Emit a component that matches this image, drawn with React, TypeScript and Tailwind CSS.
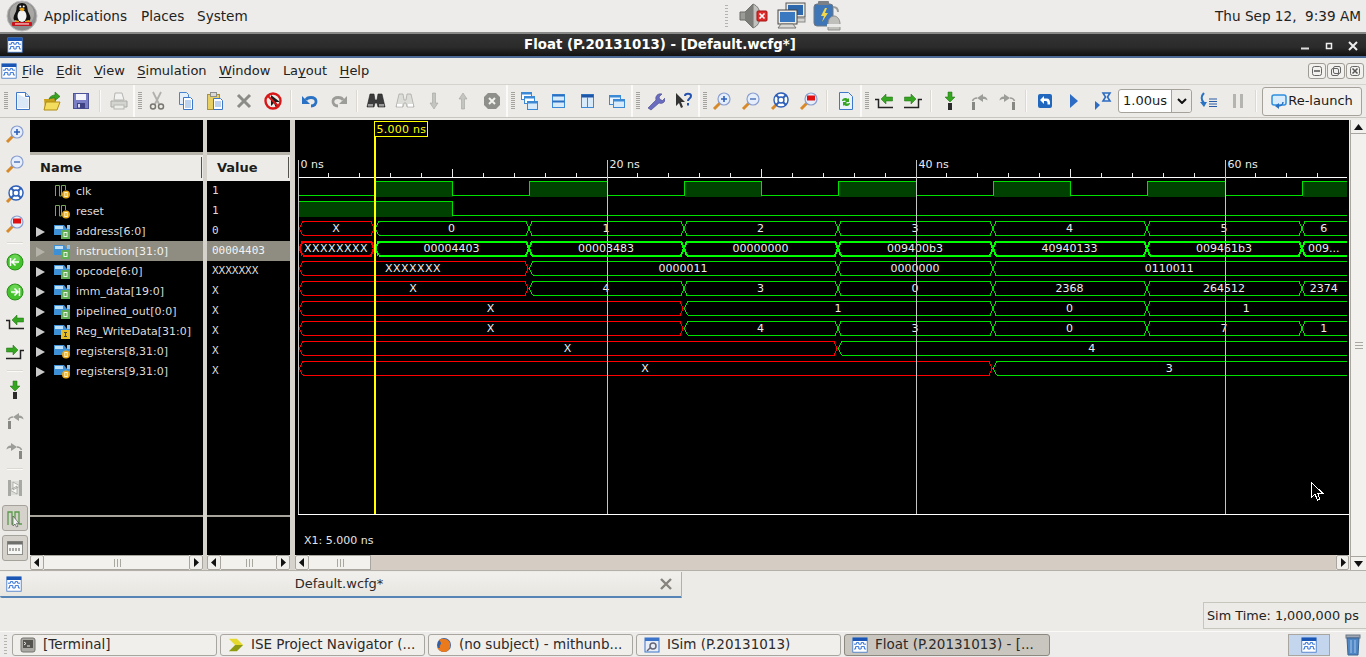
import type { ReactNode } from "react";

const FONT = "font-['DejaVu_Sans','Liberation_Sans',sans-serif]";

function Ico({ children, size = 20 }: { children: ReactNode; size?: number }) {
  return (
    <svg width={size} height={size} viewBox="0 0 20 20" className="block shrink-0">
      {children}
    </svg>
  );
}

/* ---------- app icons ---------- */

function WaveApp({ size = 16 }: { size?: number }) {
  return (
    <Ico size={size}>
      <rect x="1" y="1" width="18" height="18" fill="#fff" stroke="#3b74c9" />
      <rect x="1" y="1" width="18" height="4" fill="#1c56b4" />
      <path d="M2.5 9h3v-2h3v2h3v-2h3v2h3M2.5 15h2v-3h4v3h3v-3h4v3h2" fill="none" stroke="#2f6fd6" strokeWidth="1.2" />
    </Ico>
  );
}

function Tux() {
  return (
    <svg width="32" height="32" viewBox="0 0 32 32" className="block">
      <circle cx="16" cy="16" r="15" fill="#8d8d8d" stroke="#bdbdbd" />
      <circle cx="16" cy="14" r="12" fill="#a9a7a4" />
      <path d="M16 3c-4 0-5.500 3-5.500 6 0 3-3 6-3 9 0 3 3 4 8.500 4s8.500-1 8.500-4c0-3-3-6-3-9 0-3-1.500-6-5.500-6z" fill="#111" />
      <ellipse cx="16" cy="16" rx="4.500" ry="6" fill="#f2f2f2" />
      <path d="M13 9l3-1.500 3 1.500-3 2.500z" fill="#f0a417" />
      <circle cx="14.300" cy="6.500" r="1" fill="#fff" />
      <circle cx="17.700" cy="6.500" r="1" fill="#fff" />
      <path d="M9 20l4 1v2H9zM23 20l-4 1v2h4z" fill="#f0a417" />
      <rect x="6" y="22" width="20" height="4" rx="1" fill="#c8141c" />
      <rect x="9" y="23.300" width="14" height="1.300" fill="#f3c6c6" />
    </svg>
  );
}

function Speaker() {
  return (
    <svg width="30" height="30" viewBox="0 0 30 30" className="block">
      <path d="M2 11h5l8-8v24l-8-8H2z" fill="#9a9a96" stroke="#6c6c68" />
      <path d="M15 3c5 2 7 6 7 12s-2 10-7 12z" fill="#c2c1bd" stroke="#777" />
      <path d="M7 11l8-8v24l-8-8z" fill="#7c7c78" />
      <rect x="19" y="10" width="10" height="10" rx="1" fill="#e22b2b" stroke="#a31414" />
      <path d="M21.500 12.500l5 5m0-5l-5 5" stroke="#fff" strokeWidth="1.600" />
    </svg>
  );
}

function Network() {
  return (
    <svg width="30" height="30" viewBox="0 0 30 30" className="block">
      <rect x="9" y="2" width="19" height="14" fill="#e9e9e7" stroke="#555" />
      <rect x="11" y="4" width="15" height="10" fill="#2d68ad" />
      <rect x="14" y="17" width="14" height="4" fill="#d4d3cf" stroke="#888" />
      <rect x="1" y="9" width="19" height="14" fill="#ecebe8" stroke="#444" />
      <rect x="3" y="11" width="15" height="10" fill="#3a79c0" />
      <path d="M5 23h11l3 4H1l3-4z" fill="#d9d8d4" stroke="#777" />
    </svg>
  );
}

function Battery() {
  return (
    <svg width="32" height="32" viewBox="0 0 32 32" className="block">
      <rect x="1" y="4" width="19" height="22" rx="3" fill="#3f76b8" stroke="#6f7883" />
      <rect x="5" y="1" width="11" height="4" rx="1" fill="#7a8086" />
      <path d="M20 7c4 0 5 2 5 5" fill="none" stroke="#9d9d9a" strokeWidth="2" />
      <path d="M12 8l-4 8h3l-2 6 6-9h-3l2-5z" fill="#f2d94c" />
      <path d="M15 30v-6c0-5 3-8 6-8s6 3 6 8v6z" fill="#bfbfbc" stroke="#8f8f8c" />
      <rect x="14" y="24" width="14" height="3" fill="#e9e9e7" />
    </svg>
  );
}

/* ---------- toolbar icons ---------- */

const Doc = ({ stroke = "#3f78c8" }: { stroke?: string }) => (
  <Ico>
    <path d="M3.500 1.500h9l4 4v13h-13z" fill="#fff" stroke={stroke} />
    <path d="M4.500 3v14h11V8z" fill="#dbe8f8" />
    <path d="M12.500 1.500v4h4" fill="#cfe0f5" stroke={stroke} />
  </Ico>
);
const Open = () => (
  <Ico>
    <path d="M2 8h6l1-2h5v12H3z" fill="#c9a21a" />
    <path d="M4 11h14l-3 8H2z" fill="#f4dc5f" stroke="#b08d14" />
    <path d="M7 8c1-3 4-4 6-4V1l5 4.500-5 4V7c-2 0-4 0-6 1z" fill="#3aa321" stroke="#1d6f10" strokeWidth=".6" />
  </Ico>
);
const Save = () => (
  <Ico>
    <rect x="2.500" y="2.500" width="15" height="15" fill="#7a7ec4" stroke="#4e5296" />
    <rect x="5" y="3" width="10" height="6" fill="#f4f4fb" />
    <rect x="6" y="12" width="8" height="5.500" fill="#3f4383" />
    <rect x="7" y="13" width="2" height="3.500" fill="#d8d9ee" />
  </Ico>
);
const Print = () => (
  <Ico>
    <path d="M6 2h7l2 7H5z" fill="#f2f2f0" stroke="#b5b5b2" />
    <path d="M2 10h16v6H2z" fill="#d4d4d1" stroke="#a9a9a6" />
    <rect x="5" y="14" width="10" height="4" fill="#ecece9" stroke="#b5b5b2" />
  </Ico>
);
const Cut = () => (
  <Ico>
    <path d="M6 1l6 12M14 1l-6 12" stroke="#b0b0ad" strokeWidth="1.800" />
    <circle cx="6" cy="15.500" r="2.500" fill="none" stroke="#77776f" strokeWidth="1.500" />
    <circle cx="14" cy="15.500" r="2.500" fill="none" stroke="#77776f" strokeWidth="1.500" />
  </Ico>
);
const Copy = () => (
  <Ico>
    <path d="M3.500 1.500h7l2 2v10h-9z" fill="#e5effa" stroke="#4a83cf" />
    <path d="M7.500 6.500h7l2 2v10h-9z" fill="#fff" stroke="#3d78c8" />
    <path d="M9 10h6M9 12h6M9 14h6M9 16h6" stroke="#7aa5dc" />
  </Ico>
);
const Paste = () => (
  <Ico>
    <rect x="2.500" y="3.500" width="12" height="15" fill="#e8cf61" stroke="#ab9235" />
    <rect x="5.500" y="1.500" width="6" height="4" fill="#d9d9d6" stroke="#8d8d8a" />
    <path d="M8.500 7.500h7l2 2v9h-9z" fill="#fff" stroke="#3d78c8" />
    <path d="M10 11h6M10 13h6M10 15h6" stroke="#7aa5dc" />
  </Ico>
);
const Del = () => (
  <Ico>
    <path d="M4 4l12 12M16 4L4 16" stroke="#8b8b87" strokeWidth="3" />
  </Ico>
);
const NoDrag = () => (
  <Ico>
    <path d="M8 4l0 11 3-3 2 5 2-1-2-5 4 0z" fill="#1c1c1c" />
    <circle cx="10" cy="10" r="7.500" fill="none" stroke="#d81818" strokeWidth="2.400" />
    <path d="M4.700 4.700l10.600 10.600" stroke="#d81818" strokeWidth="2" />
  </Ico>
);
const Undo = ({ color = "#2a72c4" }: { color?: string }) => (
  <Ico>
    <path d="M6 9c1-3 9-4 10 1 .5 3-2 5-5 5" fill="none" stroke={color} strokeWidth="2.800" />
    <path d="M2 5v8h8z" fill={color} />
  </Ico>
);
const Redo = ({ color = "#9c9c99" }: { color?: string }) => (
  <Ico>
    <path d="M14 9c-1-3-9-4-10 1-.5 3 2 5 5 5" fill="none" stroke={color} strokeWidth="2.800" />
    <path d="M18 5v8h-8z" fill={color} />
  </Ico>
);
const Binoc = ({ dim = false }: { dim?: boolean }) => (
  <Ico>
    <path d="M4 3h4l1 6h2l1-6h4l3 13h-7l-1-4H9l-1 4H1z" fill={dim ? "#dcdcd8" : "#3b3b3b"} stroke={dim ? "#999" : "#222"} strokeWidth=".6" />
    <rect x="2" y="13" width="5" height="2.500" fill={dim ? "#fff" : "#999"} />
    <rect x="13" y="13" width="5" height="2.500" fill={dim ? "#fff" : "#999"} />
  </Ico>
);
const ArrowV = ({ up = false }: { up?: boolean }) => (
  <Ico>
    <path d={up ? "M10 2l4 6h-2.500v10h-3V8H6z" : "M10 18l4-6h-2.500V2h-3v10H6z"} fill="#c4c4c0" stroke="#a3a3a0" strokeWidth=".6" />
  </Ico>
);
const Stop = () => (
  <Ico>
    <path d="M6 2h8l4 4v8l-4 4H6l-4-4V6z" fill="#8e8e8a" />
    <path d="M7 7l6 6m0-6l-6 6" stroke="#f1f1ef" strokeWidth="2" />
  </Ico>
);
const Cascade = () => (
  <Ico>
    <rect x="1.500" y="1.500" width="10" height="7" fill="#fff" stroke="#3c8ad6" />
    <rect x="1.500" y="1.500" width="10" height="2" fill="#3c8ad6" />
    <rect x="4.500" y="5.500" width="10" height="7" fill="#fff" stroke="#3c8ad6" />
    <rect x="4.500" y="5.500" width="10" height="2" fill="#3c8ad6" />
    <rect x="7.500" y="10.500" width="10" height="8" fill="#d8ebfb" stroke="#3c8ad6" />
    <rect x="7.500" y="10.500" width="10" height="2" fill="#3c8ad6" />
  </Ico>
);
const SplitH = () => (
  <Ico>
    <rect x="3.500" y="3.500" width="12" height="13" fill="#d8ebfb" stroke="#3c8ad6" />
    <rect x="3.500" y="3.500" width="12" height="2" fill="#2a6fc2" />
    <rect x="3.500" y="9.500" width="12" height="2" fill="#2a6fc2" />
  </Ico>
);
const SplitV = () => (
  <Ico>
    <rect x="3.500" y="3.500" width="12" height="13" fill="#d8ebfb" stroke="#3c8ad6" />
    <rect x="3.500" y="3.500" width="12" height="3" fill="#1f56a8" />
    <path d="M9.500 6v10" stroke="#3c8ad6" />
  </Ico>
);
const Tile = () => (
  <Ico>
    <rect x="2.500" y="4.500" width="11" height="9" fill="#eaf4fd" stroke="#3c8ad6" />
    <rect x="2.500" y="4.500" width="11" height="2" fill="#3c8ad6" />
    <rect x="6.500" y="8.500" width="11" height="8" fill="#d8ebfb" stroke="#3c8ad6" />
    <rect x="6.500" y="8.500" width="11" height="2" fill="#3c8ad6" />
  </Ico>
);
const Wrench = () => (
  <Ico>
    <path d="M3 17l8-8c-1-3 1-7 6-6l-3 3 1 2.500 2.500 1 3-3c.5 4-3 7-6.500 5.500l-8 7z" fill="#6a6cc0" stroke="#45478c" strokeWidth=".6" />
  </Ico>
);
const Help = () => (
  <Ico>
    <path d="M2 2v13l3-3 2 5 2-1-2-5h4z" fill="#333" />
    <path d="M11 5c0-3 6-3 6 0 0 2.500-3 2.500-3 5" fill="none" stroke="#2452b0" strokeWidth="2" />
    <rect x="13" y="12" width="2" height="2.500" fill="#2452b0" />
  </Ico>
);
const Lens = ({ kind }: { kind: "in" | "out" | "fit" | "area" }) => (
  <Ico>
    <path d="M8.500 11.500L2 18" stroke="#d88a2a" strokeWidth="3" />
    <circle cx="12" cy="8" r="6" fill="#e6eefb" stroke="#8a9fd0" strokeWidth="1.200" />
    {kind === "in" && <path d="M9 8h6M12 5v6" stroke="#2d5fb8" strokeWidth="1.600" />}
    {kind === "out" && <path d="M9 8h6" stroke="#5d7fc0" strokeWidth="1.600" />}
    {kind === "fit" && (
      <>
        <circle cx="11" cy="9" r="7" fill="#fff" stroke="#2d5fb8" strokeWidth="1.400" />
        <circle cx="11" cy="9" r="3" fill="#fff" stroke="#2d5fb8" strokeWidth="1.400" />
        <path d="M6 4l2.800 2.800M16 4l-2.800 2.800M6 14l2.800-2.800M16 14l-2.800-2.800" stroke="#2d5fb8" strokeWidth="2" />
      </>
    )}
    {kind === "area" && <rect x="8" y="4.500" width="8" height="5" fill="#e01010" />}
  </Ico>
);
const Refresh = () => (
  <Ico>
    <path d="M3.500 1.500h9l4 4v13h-13z" fill="#eaf3fc" stroke="#3f78c8" />
    <path d="M6 10c0-3 4-4 6-2l1-1v4h-4l1-1c-1-1-2.500-.5-3 0zM14 12c0 3-4 4-6 2l-1 1v-4h4l-1 1c1 1 2.500.5 3 0z" fill="#36a521" />
  </Ico>
);
const Step1 = () => (
  <Ico>
    <path d="M1 8.500h3.500v8H19" fill="none" stroke="#222" strokeWidth="1.500" />
    <path d="M7 8l5-5v3h6.500v4H12v3z" fill="#36a521" stroke="#1c6d10" strokeWidth=".5" />
  </Ico>
);
const Step2 = () => (
  <Ico>
    <path d="M1 16.500h14.500v-8H19" fill="none" stroke="#222" strokeWidth="1.500" />
    <path d="M13 8L8 3v3H1.500v4H8v3z" fill="#36a521" stroke="#1c6d10" strokeWidth=".5" />
  </Ico>
);
const GreenCircle = ({ right = false }: { right?: boolean }) => (
  <Ico>
    <circle cx="10" cy="10" r="8" fill="#43c22b" stroke="#2b8f1a" />
    <circle cx="10" cy="7.500" r="5" fill="#8fe57a" opacity=".5" />
    <path d={right ? "M14.500 6v8M6 10h7M9.500 6.500L13 10l-3.500 3.500" : "M5.500 6v8M14 10H7M10.500 6.500L7 10l3.500 3.500"} fill="none" stroke="#fff" strokeWidth="1.500" />
  </Ico>
);
const GreenDown = () => (
  <Ico>
    <path d="M10 11l5-5h-3V1H8v5H5z" fill="#36a521" stroke="#1c6d10" strokeWidth=".5" />
    <rect x="8" y="12" width="4" height="7" fill="#2c2c2c" />
  </Ico>
);
const StepBack = () => (
  <Ico>
    <rect x="3" y="11" width="3" height="8" fill="#878784" />
    <path d="M8 7l6-4v2.500c3 0 4.500 2 4.500 4-1.500-1.500-3-1.500-4.500-1.500v3z" fill="#9c9c99" />
    <path d="M8 7c-2 0-4 1.500-4.500 3" stroke="#9c9c99" fill="none" strokeWidth="1.500" />
  </Ico>
);
const StepFwd = () => (
  <Ico>
    <rect x="14" y="11" width="3" height="8" fill="#878784" />
    <path d="M12 7L6 3v2.500c-3 0-4.500 2-4.500 4 1.500-1.500 3-1.500 4.500-1.500v3z" fill="#9c9c99" />
    <path d="M12 7c2 0 4 1.500 4.500 3" stroke="#9c9c99" fill="none" strokeWidth="1.500" />
  </Ico>
);
const Back = () => (
  <Ico>
    <rect x="3" y="3" width="14" height="14" rx="2" fill="#2167bd" />
    <path d="M5 9l4-4v2.500h3c2 0 3 2 3 4v2h-2.500v-1.500c0-1-.5-2-1.500-2H9V13z" fill="#fff" />
  </Ico>
);
const Play = () => (
  <Ico>
    <path d="M6 3l8 7-8 7z" fill="#2d6cc4" />
  </Ico>
);
const Sand = () => (
  <Ico>
    <path d="M2 10l5 4-5 5z" fill="#2d6cc4" />
    <path d="M10 2h7l-2.500 4 2.500 4h-7l2.500-4z" fill="none" stroke="#2d6cc4" strokeWidth="1.600" />
  </Ico>
);
const Restart = () => (
  <Ico>
    <path d="M5 2c-3 3-3 7 0 10" fill="none" stroke="#2a72c4" strokeWidth="2.200" />
    <path d="M1 11l7 0 -3 5z" fill="#2a72c4" />
    <path d="M10 8h8M10 10.500h8M10 13h8M10 15.500h8" stroke="#2a5ca8" strokeWidth="1.200" />
  </Ico>
);
const Pause = () => (
  <Ico>
    <rect x="5" y="3" width="3" height="14" fill="#b4b4b0" />
    <rect x="12" y="3" width="3" height="14" fill="#b4b4b0" />
  </Ico>
);
const Relaunch = () => (
  <svg width="16" height="16" viewBox="0 0 16 16" className="block">
    <rect x="1" y="2" width="14" height="10" rx="2" fill="#d8ecfb" stroke="#2f8fe0" strokeWidth="1.500" />
    <path d="M12 9c0 3-3 4-5 4" fill="none" stroke="#2a72c4" strokeWidth="1.500" />
    <path d="M8 10v6l-4-3z" fill="#2a72c4" />
  </svg>
);
const WaveToggle = () => (
  <Ico>
    <path d="M3 17V4h4v12h3V4h4v12h3" fill="none" stroke="#5a9b4a" strokeWidth="1.300" />
    <path d="M8 8v10l2-2 1.500 3 1.500-.7-1.500-3H14z" fill="#f2f2f2" stroke="#444" strokeWidth=".6" />
  </Ico>
);
const Swap = () => (
  <Ico>
    <path d="M3 2h3v16H3zM14 2h3v16h-3z" fill="#a8a8a5" />
    <path d="M6 3h8v14H6z" fill="#dcdcd9" />
    <path d="M8 4l7 4-7 4zM12 8l-7 4 7 4z" fill="#f7f7f5" stroke="#8e8e8a" strokeWidth=".6" />
  </Ico>
);
const Clock = () => (
  <Ico>
    <rect x="2.500" y="3.500" width="15" height="13" fill="#f7f7f5" stroke="#8e8e8a" />
    <rect x="2.500" y="3.500" width="15" height="3" fill="#6f6f6c" />
    <path d="M5 10v3M8 10v3M11 10v3M14 10v3" stroke="#8e8e8a" strokeWidth="1.500" />
  </Ico>
);

/* ---------- toolbar bits ---------- */

function Btn({ children }: { children: ReactNode }) {
  return <div className="w-[29px] flex items-center justify-center shrink-0">{children}</div>;
}
function Sep() {
  return (
    <div className="w-[8px] flex justify-center items-center shrink-0">
      <div className="w-[2px] h-[22px] bg-[#dcd9d3] border-r border-[#fbfaf8]" />
    </div>
  );
}
function Grip() {
  return <div className="w-[4px] h-[18px] bg-[repeating-linear-gradient(to_bottom,#a5a39d_0,#a5a39d_1px,transparent_1px,transparent_2px)]" />;
}
/* toolbar break: bevel line, then the drag handle of the next group */
function Break() {
  return (
    <div className="w-[9px] self-stretch flex items-center shrink-0 border-l-2 border-[#fbfaf8] pl-[3px]">
      <Grip />
    </div>
  );
}

function Toolbar() {
  return (
    <div className="h-[34px] flex items-stretch shrink-0 bg-[#edebe7] border-t border-[#d6d3cd] border-b border-b-[#c9c6c0]">
      <div className="w-[8px] flex items-center pl-[4px] shrink-0">
        <Grip />
      </div>
      <Btn><Doc /></Btn>
      <Btn><Open /></Btn>
      <Btn><Save /></Btn>
      <div className="w-[9px] flex justify-center items-center shrink-0">
        <div className="w-[2px] h-[22px] bg-[#dcd9d3] border-r border-[#fbfaf8]" />
      </div>
      <Btn><Print /></Btn>
      <Break />
      <Btn><Cut /></Btn>
      <Btn><Copy /></Btn>
      <Btn><Paste /></Btn>
      <Btn><Del /></Btn>
      <Btn><NoDrag /></Btn>
      <Sep />
      <Btn><Undo /></Btn>
      <Btn><Redo /></Btn>
      <Sep />
      <Btn><Binoc /></Btn>
      <Btn><Binoc dim /></Btn>
      <Btn><ArrowV /></Btn>
      <Btn><ArrowV up /></Btn>
      <Btn><Stop /></Btn>
      <Break />
      <Btn><Cascade /></Btn>
      <Btn><SplitH /></Btn>
      <Btn><SplitV /></Btn>
      <Btn><Tile /></Btn>
      <Break />
      <Btn><Wrench /></Btn>
      <Btn><Help /></Btn>
      <Break />
      <Btn><Lens kind="in" /></Btn>
      <Btn><Lens kind="out" /></Btn>
      <Btn><Lens kind="fit" /></Btn>
      <Btn><Lens kind="area" /></Btn>
      <Sep />
      <Btn><Refresh /></Btn>
      <Break />
      <Btn><Step1 /></Btn>
      <Btn><Step2 /></Btn>
      <Sep />
      <Btn><GreenDown /></Btn>
      <Btn><StepBack /></Btn>
      <Btn><StepFwd /></Btn>
      <Sep />
      <Btn><Back /></Btn>
      <Btn><Play /></Btn>
      <Btn><Sand /></Btn>
      <div className="w-[74px] h-[24px] self-center ml-[1px] mr-[2px] flex shrink-0 rounded-[3px] border border-[#a5a29c] bg-white text-[13px] text-[#1a1a1a]">
        <div className="flex-1 pl-[4px] leading-[22px]">1.00us</div>
        <div className="w-[20px] border-l border-[#a5a29c] bg-[#eeece8] flex items-center justify-center rounded-r-[3px]">
          <svg width="10" height="6" viewBox="0 0 10 6" className="block">
            <path d="M1 1l4 4 4-4" fill="none" stroke="#111" strokeWidth="2" />
          </svg>
        </div>
      </div>
      <Btn><Restart /></Btn>
      <Btn><Pause /></Btn>
      <Sep />
      <div className="ml-[2px] w-[100px] h-[29px] self-center flex items-center justify-center gap-[1px] shrink-0 rounded-[3px] border border-[#a5a29c] bg-[#f3f1ee] text-[13px] text-[#1a1a1a]">
        <Relaunch />
        <span>Re-launch</span>
      </div>
    </div>
  );
}

/* ---------- side toolbar ---------- */

function SideBtn({ children, boxed = false }: { children: ReactNode; boxed?: boolean }) {
  return (
    <div className="h-[30px] flex items-center justify-center shrink-0">
      {boxed ? (
        <div className="w-[26px] h-[26px] rounded-[3px] border border-[#a5a29c] bg-[#d5d2cc] flex items-center justify-center">
          {children}
        </div>
      ) : (
        children
      )}
    </div>
  );
}
function SideSep() {
  return (
    <div className="h-[8px] flex items-center justify-center shrink-0">
      <div className="w-[16px] h-[2px] bg-[#dcd9d3] border-b border-[#fbfaf8]" />
    </div>
  );
}
function SideBar() {
  return (
    <div className="w-[30px] -mt-[1px] flex flex-col shrink-0">
      <SideBtn><Lens kind="in" /></SideBtn>
      <SideBtn><Lens kind="out" /></SideBtn>
      <SideBtn><Lens kind="fit" /></SideBtn>
      <SideBtn><Lens kind="area" /></SideBtn>
      <SideSep />
      <SideBtn><GreenCircle /></SideBtn>
      <SideBtn><GreenCircle right /></SideBtn>
      <SideBtn><Step1 /></SideBtn>
      <SideBtn><Step2 /></SideBtn>
      <SideSep />
      <SideBtn><GreenDown /></SideBtn>
      <SideBtn><StepBack /></SideBtn>
      <SideBtn><StepFwd /></SideBtn>
      <SideSep />
      <SideBtn><Swap /></SideBtn>
      <SideBtn boxed><WaveToggle /></SideBtn>
      <SideBtn boxed><Clock /></SideBtn>
    </div>
  );
}

/* ---------- scrollbars ---------- */

function ArrowBtn({ dir, wide = 14 }: { dir: "l" | "r"; wide?: number }) {
  return (
    <div className="h-full flex items-center justify-center bg-[#f1efec] border border-[#a9a69f] rounded-[2px] shrink-0" style={{ width: wide }}>
      <svg width="6" height="9" viewBox="0 0 6 9" className="block">
        <path d={dir === "l" ? "M5 0v9L0 4.500z" : "M1 0v9l5-4.500z"} fill="#111" />
      </svg>
    </div>
  );
}
function Grips() {
  return (
    <svg width="8" height="8" viewBox="0 0 8 8" className="block">
      <path d="M1.500 0v8M4.500 0v8M7.500 0v8" stroke="#aaa79f" />
    </svg>
  );
}
function HScroll() {
  return (
    <div className="h-[15px] flex shrink-0">
      <ArrowBtn dir="l" />
      <div className="flex-1 bg-[#f3f1ee] border-y border-[#a9a69f] flex items-center justify-center">
        <Grips />
      </div>
      <ArrowBtn dir="r" />
    </div>
  );
}

/* ---------- signal list ---------- */

type Sig = { name: string; value: string; kind: "clk" | "bus" | "reg" | "in"; bus: boolean };

const SIGNALS: Sig[] = [
  { name: "clk", value: "1", kind: "clk", bus: false },
  { name: "reset", value: "1", kind: "clk", bus: false },
  { name: "address[6:0]", value: "0", kind: "bus", bus: true },
  { name: "instruction[31:0]", value: "00004403", kind: "bus", bus: true },
  { name: "opcode[6:0]", value: "XXXXXXX", kind: "bus", bus: true },
  { name: "imm_data[19:0]", value: "X", kind: "bus", bus: true },
  { name: "pipelined_out[0:0]", value: "X", kind: "bus", bus: true },
  { name: "Reg_WriteData[31:0]", value: "X", kind: "in", bus: true },
  { name: "registers[8,31:0]", value: "X", kind: "reg", bus: true },
  { name: "registers[9,31:0]", value: "X", kind: "reg", bus: true },
];

function SigIcon({ kind }: { kind: Sig["kind"] }) {
  return (
    <svg width="17" height="15" viewBox="0 0 17 15" className="block shrink-0">
      {kind === "clk" ? (
        <path d="M1.500 12V1.500h4V12h2V1.500h4V6" fill="none" stroke="#77a75a" />
      ) : (
        <>
          <path d="M0 1h10l3 4h3V1v10H0z" fill="#3d8fd6" />
          <path d="M1 2h8v3H1z" fill="#bfe0f7" />
          <path d="M13 1h3v4h-3z" fill="#8fc2ea" />
        </>
      )}
      {(kind === "clk" || kind === "reg") && (
        <>
          <circle cx="12" cy="10.500" r="4" fill="#e8a81c" />
          <rect x="10.800" y="8.500" width="2.400" height="4" fill="none" stroke="#fff3c4" />
        </>
      )}
      {kind === "bus" && (
        <>
          <rect x="7" y="6" width="9" height="9" fill="#5fae54" />
          <rect x="10" y="8.500" width="3" height="4" fill="none" stroke="#e8f5e4" />
        </>
      )}
      {kind === "in" && (
        <>
          <rect x="7" y="6" width="9" height="9" fill="#e8bd2c" />
          <path d="M10 8.500h3M11.500 8.500v4M10 12.500h3" stroke="#443" />
        </>
      )}
    </svg>
  );
}

function PanelHead({ title, divider }: { title: string; divider: string }) {
  return (
    <div className="h-[26px] bg-[#edebe7] flex items-center relative shrink-0">
      <span className={`text-[13px] font-bold text-[#1c1c1c] ${divider}`}>{title}</span>
      <div className="absolute right-[1px] top-[2px] bottom-[3px] w-[1px] bg-[#55534e]" />
    </div>
  );
}

function NamePanel() {
  return (
    <div className="w-[173px] flex flex-col shrink-0">
      <div className="h-[32px] bg-black shrink-0" />
      <div className="h-[3px] bg-[#b7b4ac] shrink-0" />
      <PanelHead title="Name" divider="pl-[10px]" />
      <div className="h-[334px] bg-black shrink-0">
        {SIGNALS.map((s, i) => (
          <div key={s.name} className={`h-[20px] flex items-center text-[11px] ${i === 3 ? "bg-[#8f8d81] text-[#f2f2f2]" : "text-[#dcdcdc]"}`}>
            <div className="w-[24px] pl-[6px] shrink-0">
              {s.bus && (
                <svg width="9" height="10" viewBox="0 0 9 10" className="block mt-[1px]">
                  <path d="M0 0l9 5-9 5z" fill={i === 3 ? "#b5b3a9" : "#c9c9c9"} />
                </svg>
              )}
            </div>
            <SigIcon kind={s.kind} />
            <span className="pl-[5px] pt-[2px] whitespace-nowrap">{s.name}</span>
          </div>
        ))}
      </div>
      <div className="h-[2px] bg-[#a8a59d] shrink-0" />
      <div className="h-[38px] bg-black shrink-0" />
      <HScroll />
    </div>
  );
}

function ValuePanel() {
  return (
    <div className="w-[83px] flex flex-col shrink-0">
      <div className="h-[32px] bg-black shrink-0" />
      <div className="h-[3px] bg-[#b7b4ac] shrink-0" />
      <PanelHead title="Value" divider="pl-[10px]" />
      <div className="h-[334px] bg-black shrink-0">
        {SIGNALS.map((s, i) => (
          <div key={s.name} className={`h-[20px] flex items-center pl-[5px] text-[11px] font-['DejaVu_Sans_Mono',monospace] ${i === 3 ? "bg-[#8f8d81] text-[#f2f2f2]" : "text-[#dcdcdc]"}`}>
            {s.value}
          </div>
        ))}
      </div>
      <div className="h-[2px] bg-[#a8a59d] shrink-0" />
      <div className="h-[38px] bg-black shrink-0" />
      <HScroll />
    </div>
  );
}

/* ---------- waveform ---------- */

const END_X = 1347;
// pixel column of a transition, half-pixel so 1px lines stay sharp
const sx = (t: number) => Math.floor(298 + t * 15.45) + 0.5;

type Seg = [start: number, end: number | null, label: string];

const BUSES: Seg[][] = [
  [[0, 5, "X"], [5, 15, "0"], [15, 25, "1"], [25, 35, "2"], [35, 45, "3"], [45, 55, "4"], [55, 65, "5"], [65, null, "6"]],
  [[0, 5, "XXXXXXXX"], [5, 15, "00004403"], [15, 25, "00003483"], [25, 35, "00000000"], [35, 45, "009400b3"], [45, 55, "40940133"], [55, 65, "009461b3"], [65, null, "009..."]],
  [[0, 15, "XXXXXXX"], [15, 35, "0000011"], [35, 45, "0000000"], [45, null, "0110011"]],
  [[0, 15, "X"], [15, 25, "4"], [25, 35, "3"], [35, 45, "0"], [45, 55, "2368"], [55, 65, "264512"], [65, null, "2374"]],
  [[0, 25, "X"], [25, 45, "1"], [45, 55, "0"], [55, null, "1"]],
  [[0, 25, "X"], [25, 35, "4"], [35, 45, "3"], [45, 55, "0"], [55, 65, "7"], [65, null, "1"]],
  [[0, 35, "X"], [35, null, "4"]],
  [[0, 45, "X"], [45, null, "3"]],
];

function BusRow({ segs, y, bold }: { segs: Seg[]; y: number; bold: boolean }) {
  const top = y - 7;
  const bot = y + 7;
  return (
    <g>
      {segs.map(([a, b, label], i) => {
        const isX = /^X+$/.test(label);
        const afterX = i > 0 && /^X+$/.test(segs[i - 1][2]);
        const xa = a === 0 ? 299.5 : sx(a) - (afterX ? 0 : 0.5);
        const xb = b === null ? END_X : sx(b) - (isX ? 1.5 : 0.5);
        const color = isX ? "#ff0000" : bold ? "#00ff00" : "#00e000";
        const d = `M${xa + 3} ${top} L${xa} ${y} L${xa + 3} ${bot}`;
        const body = b === null
          ? `M${xa + 3} ${top} L${xb} ${top} M${xa + 3} ${bot} L${xb} ${bot}`
          : `M${xa + 3} ${top} L${xb - 3} ${top} L${xb} ${y} L${xb - 3} ${bot} L${xa + 3} ${bot}`;
        const cx = (sx(a) + (b === null ? END_X : sx(b))) / 2 - 1;
        return (
          <g key={a}>
            <path d={`${d} ${body}`} fill="none" stroke={color} strokeWidth={bold ? 2 : 1} />
            <text x={cx} y={y + 3.5} textAnchor="middle" fontSize="11" fill="#ececec" letterSpacing={isX && label.length > 1 ? 0.45 : 0}>
              {label}
            </text>
          </g>
        );
      })}
    </g>
  );
}

function Waves() {
  const minor: number[] = [];
  for (let t = 0; t <= 66; t += 2) minor.push(t);
  const clkHigh = [5, 15, 25, 35, 45, 55, 65];
  return (
    <svg width="1054" height="395" viewBox="295 120 1054 395" className="block shrink-0" fontFamily="'DejaVu Sans', sans-serif" shapeRendering="crispEdges">
      <rect x="295" y="120" width="1054" height="395" fill="#000" />
      <path d={`M298.500 177.500H${END_X}`} stroke="#fff" />
      {minor.map((t) => (
        <path key={t} d={`M${sx(t)} ${t % 10 === 0 ? 169 : 173}V177`} stroke="#e8e8e8" />
      ))}
      {[0, 20, 40, 60].map((t) => (
        <text key={t} x={sx(t) + 2} y="168" fontSize="11" fill="#ececec">
          {t} ns
        </text>
      ))}

      {clkHigh.map((t) => (
        <rect key={t} x={sx(t)} y="181.500" width={Math.min(sx(t + 5), END_X) - sx(t)} height="15" fill="#004000" />
      ))}
      <path
        d={`M299 195.500 ${clkHigh.map((t) => `H${sx(t)} V181.500 H${Math.min(sx(t + 5), END_X)} ${t < 65 ? "V195.500" : ""}`).join(" ")}`}
        fill="none"
        stroke="#00e000"
      />
      <rect x="299" y="201.500" width={sx(10) - 299} height="15" fill="#004000" />
      <path d={`M299 201.500H${sx(10)}V215.500H${END_X}`} fill="none" stroke="#00e000" />

      {BUSES.map((segs, i) => (
        <BusRow key={i} segs={segs} y={228.5 + i * 20} bold={i === 1} />
      ))}

      {[0, 20, 40, 60].map((t) => (
        <path key={t} d={`M${sx(t)} 160V514`} stroke="#c4c4c4" />
      ))}
      <path d="M298 514.500H1349" stroke="#fff" />

      <rect x="374" y="121" width="2" height="393" fill="#ffff00" />
      <rect x="374.500" y="121.500" width="53" height="15" fill="#000" stroke="#ffff00" />
      <text x="376.500" y="132.500" fontSize="11" fill="#ffff00" letterSpacing="0.25">
        5.000 ns
      </text>

      <path d="M1311.500 482.500v15l3.500-3.500 2.500 6 2.500-1-2.500-6h5z" fill="#000" stroke="#fff" />
    </svg>
  );
}

function WavePanel() {
  return (
    <div className="w-[1054px] flex flex-col shrink-0">
      <Waves />
      <div className="h-[40px] bg-black pt-[18px] pl-[9px] text-[11px] text-[#e6e6e6] shrink-0">X1: 5.000 ns</div>
      <div className="h-[15px] flex shrink-0">
        <ArrowBtn dir="l" />
        <div className="w-[62px] bg-[#f3f1ee] border-y border-r border-[#a9a69f] flex items-center justify-center">
          <Grips />
        </div>
        <div className="flex-1 bg-[#d5cdc3]" />
        <ArrowBtn dir="r" wide={13} />
      </div>
    </div>
  );
}

function VScroll() {
  return (
    <div className="w-[16px] ml-[1px] flex flex-col shrink-0 bg-[#f3f1ee] border-l border-[#a9a69f]">
      <div className="h-[14px] flex items-center justify-center border-b border-[#a9a69f]">
        <svg width="9" height="6" viewBox="0 0 9 6" className="block">
          <path d="M0 6h9L4.500 0z" fill="#111" />
        </svg>
      </div>
      <div className="flex-1 flex items-center justify-center">
        <svg width="8" height="8" viewBox="0 0 8 8" className="block">
          <path d="M0 1.500h8M0 4.500h8M0 7.500h8" stroke="#aaa79f" />
        </svg>
      </div>
      <div className="h-[14px] flex items-center justify-center border-t border-[#a9a69f]">
        <svg width="9" height="6" viewBox="0 0 9 6" className="block">
          <path d="M0 0h9L4.500 6z" fill="#111" />
        </svg>
      </div>
    </div>
  );
}

/* ---------- chrome ---------- */

function Menu({ pre = "", u, post }: { pre?: string; u: string; post: string }) {
  return (
    <span>
      {pre}
      <span className="underline underline-offset-2">{u}</span>
      {post}
    </span>
  );
}

function SmallBox({ children }: { children: ReactNode }) {
  return (
    <div className="w-[18px] h-[16px] rounded-[3px] border border-[#9f9c95] bg-[#f3f1ee] flex items-center justify-center">
      <svg width="12" height="12" viewBox="0 0 12 12" className="block">
        {children}
      </svg>
    </div>
  );
}

function Task({ icon, label, active = false, width }: { icon: ReactNode; label: string; active?: boolean; width: string }) {
  return (
    <div className={`${width} h-[22px] rounded-[3px] border flex items-center pl-[7px] gap-[7px] text-[13.5px] text-[#2a2a2a] shrink-0 whitespace-nowrap ${active ? "bg-[#c9c6bf] border-[#8c8981]" : "bg-[#f1efec] border-[#a9a69f]"}`}>
      {icon}
      <span>{label}</span>
    </div>
  );
}

export default function App() {
  return (
    <div className={`w-[1366px] h-[657px] overflow-hidden flex flex-col bg-[#edebe7] ${FONT}`}>
      {/* gnome panel */}
      <div className="h-[32px] flex items-center bg-[#edecea] text-[13.6px] leading-[30px] text-[#222] shrink-0">
        <div className="w-[44px] pl-[6px] shrink-0">
          <Tux />
        </div>
        <span className="w-[97px] pb-[1px]">Applications</span>
        <span className="w-[56px] pb-[1px]">Places</span>
        <span className="w-[50px] pb-[1px]">System</span>
        <div className="ml-[478px] w-[3px] h-[22px] bg-[repeating-linear-gradient(to_bottom,#b5b3ad_0,#b5b3ad_1px,transparent_1px,transparent_3px)]" />
        <div className="ml-[10px]"><Speaker /></div>
        <div className="ml-[9px]"><Network /></div>
        <div className="ml-[6px]"><Battery /></div>
        <span className="ml-auto pr-[5px] pb-[1px] whitespace-pre">Thu Sep 12,  9:39 AM</span>
      </div>

      {/* window title */}
      <div className="h-[26px] flex items-center shrink-0 border-t-2 border-[#8a8a88] border-b-2 border-b-[#4d6a96] bg-[linear-gradient(to_bottom,#333,#2b2b2b_60%,#111)] text-white">
        <div className="w-[30px] pl-[7px] shrink-0">
          <WaveApp />
        </div>
        <div className="flex-1 text-center text-[13.35px] font-bold pr-[6px]">Float (P.20131013) - [Default.wcfg*]</div>
        <div className="w-[70px] flex items-center shrink-0">
          <svg width="70" height="14" viewBox="0 0 70 14" className="block">
            <path d="M5 10.500h8" stroke="#ddd" strokeWidth="2" />
            <rect x="30.500" y="5.500" width="5" height="5" fill="none" stroke="#eee" strokeWidth="1.500" />
            <path d="M53 4l8 8m0-8l-8 8" stroke="#eee" strokeWidth="2" />
          </svg>
        </div>
      </div>

      {/* menu */}
      <div className="h-[26px] flex items-center bg-[#edebe7] text-[13px] text-[#222] shrink-0">
        <div className="w-[22px] pl-[1px] shrink-0">
          <WaveApp />
        </div>
        <div className="flex gap-[12.5px]">
          <Menu u="F" post="ile" />
          <Menu u="E" post="dit" />
          <Menu u="V" post="iew" />
          <Menu u="S" post="imulation" />
          <Menu u="W" post="indow" />
          <Menu pre="La" u="y" post="out" />
          <Menu u="H" post="elp" />
        </div>
        <div className="ml-auto pr-[2px] flex gap-[1px]">
          <SmallBox><rect x="1.500" y="1.500" width="9" height="9" rx="2" fill="none" stroke="#666" /><path d="M3 6h6" stroke="#555" strokeWidth="1.500" /></SmallBox>
          <SmallBox><rect x="1.500" y="3.500" width="7" height="7" rx="1.500" fill="none" stroke="#666" /><rect x="3.500" y="1.500" width="7" height="7" rx="1.500" fill="none" stroke="#666" /></SmallBox>
          <SmallBox><rect x="1.500" y="1.500" width="9" height="9" rx="2" fill="none" stroke="#666" /><path d="M3.500 3.500l5 5m0-5l-5 5" stroke="#555" strokeWidth="1.500" /></SmallBox>
        </div>
      </div>

      <Toolbar />

      {/* main area */}
      <div className="h-[452px] pt-[2px] flex shrink-0">
        <SideBar />
        <NamePanel />
        <div className="w-[4px] bg-[#d6d3cc] shrink-0" />
        <ValuePanel />
        <div className="w-[5px] bg-[#d6d3cc] shrink-0" />
        <WavePanel />
        <VScroll />
      </div>

      {/* tab strip */}
      <div className="h-[28px] border-t border-[#b3b0a9] pt-[1px] shrink-0">
        <div className="w-[682px] h-[26px] pl-[6px] pr-[8px] flex items-center bg-[linear-gradient(to_bottom,#f2f0ed,#e8e6e1)] border-b-2 border-[#5685b5] border-r border-r-[#b3b0a9] rounded-bl-[2px] text-[13px] text-[#2a2a2a]">
          <WaveApp />
          <span className="flex-1 text-center pr-[3px]">Default.wcfg*</span>
          <svg width="14" height="14" viewBox="0 0 14 14" className="block">
            <path d="M2 2l10 10m0-10L2 12" stroke="#85837c" strokeWidth="2.400" />
          </svg>
        </div>
      </div>

      {/* status bar */}
      <div className="h-[33px] flex justify-end items-start pt-[4px] shrink-0">
        <div className="w-[163px] h-[27px] border border-[#c8c5bd] border-r-0 flex items-center pl-[3px] text-[12.8px] text-[#222] whitespace-nowrap">
          Sim Time: 1,000,000 ps
        </div>
      </div>

      {/* taskbar */}
      <div className="h-[26px] flex items-center gap-[3px] border-t border-[#fbfaf8] bg-[#edecea] shrink-0">
        <div className="w-[9px] h-[20px] pl-[4px] shrink-0">
          <div className="w-[3px] h-full bg-[repeating-linear-gradient(to_bottom,#b5b3ad_0,#b5b3ad_1px,transparent_1px,transparent_3px)]" />
        </div>
        <Task
          width="w-[205px]"
          label="[Terminal]"
          icon={
            <svg width="16" height="16" viewBox="0 0 16 16" className="block shrink-0">
              <rect x="1" y="1" width="14" height="14" rx="2" fill="#aaa9a4" stroke="#77756f" />
              <rect x="3" y="3" width="10" height="8" fill="#55534e" />
              <path d="M4 5l2 1.500L4 8M7 9h3" stroke="#eee" fill="none" />
            </svg>
          }
        />
        <Task
          width="w-[205px]"
          label="ISE Project Navigator (..."
          icon={
            <svg width="16" height="16" viewBox="0 0 18 16" className="block shrink-0">
              <path d="M1 1h9l7 7H8z" fill="#e6d92e" />
              <path d="M8 8h9l-7 7H1z" fill="#8e9a12" />
            </svg>
          }
        />
        <Task
          width="w-[205px]"
          label="(no subject) - mithunb..."
          icon={
            <svg width="16" height="16" viewBox="0 0 16 16" className="block shrink-0">
              <circle cx="8" cy="8" r="7" fill="#2f5fa8" />
              <path d="M3 3c3-2 9-2 11 3 1 4-1 9-6 9-3 0-6-2-7-5 1 1 2 1 3 1-1-2 0-3 1-4 0-2-1-3-2-4z" fill="#ea7a1c" />
            </svg>
          }
        />
        <Task
          width="w-[205px]"
          label="ISim (P.20131013)"
          icon={
            <svg width="16" height="16" viewBox="0 0 16 16" className="block shrink-0">
              <rect x="1" y="1" width="14" height="14" fill="#e8eef7" stroke="#3b74c9" />
              <rect x="1" y="1" width="14" height="3" fill="#3b74c9" />
              <circle cx="9" cy="9" r="3" fill="none" stroke="#667" strokeWidth="1.500" />
              <path d="M3 14l4-4" stroke="#667" strokeWidth="1.500" />
            </svg>
          }
        />
        <Task width="w-[206px]" active label="Float (P.20131013) - [..." icon={<WaveApp />} />
        <div className="ml-[235px] w-[42px] h-[22px] bg-[#c4d5ee] border border-[#a9a69f] flex items-center justify-center shrink-0">
          <WaveApp />
        </div>
        <div className="ml-[12px] shrink-0">
          <svg width="16" height="22" viewBox="0 0 16 22" className="block">
            <rect x="1" y="1" width="14" height="3" fill="#9ea7b3" stroke="#6b7582" />
            <path d="M2 4h12l-1 17H3z" fill="#4f86c6" stroke="#3b628f" />
            <path d="M6 6v13M10 6v13" stroke="#a8c8ea" />
          </svg>
        </div>
      </div>
    </div>
  );
}
